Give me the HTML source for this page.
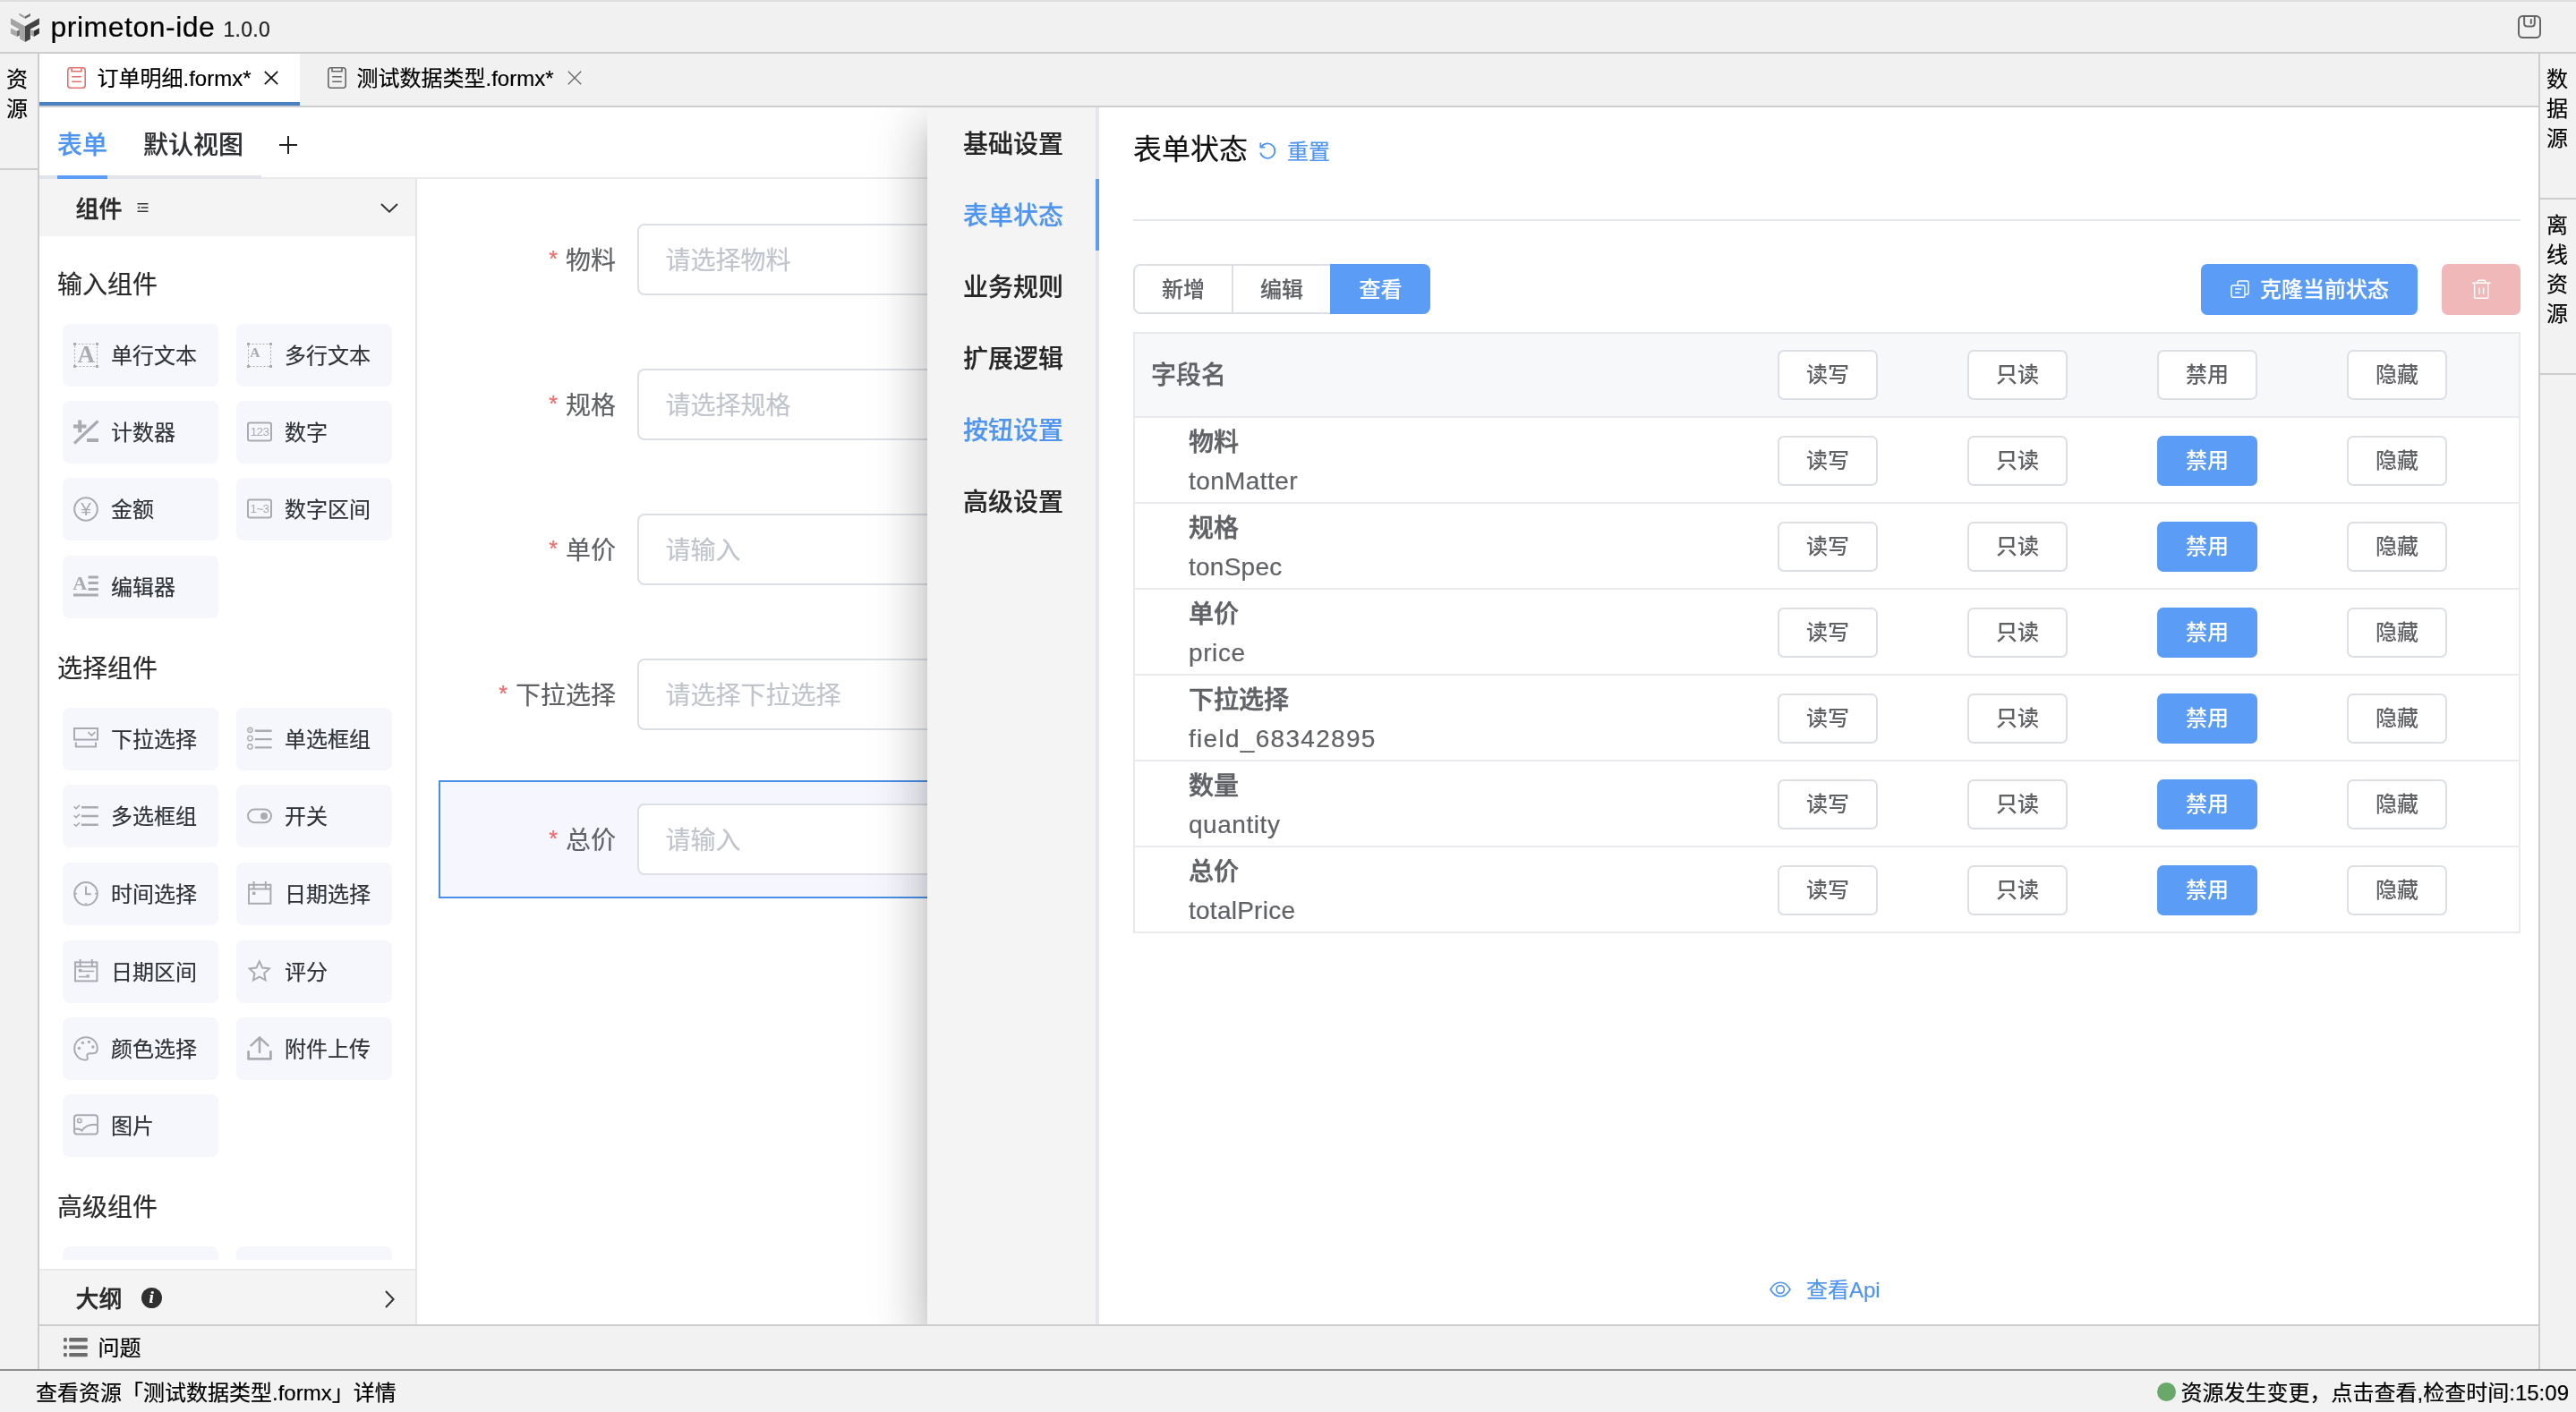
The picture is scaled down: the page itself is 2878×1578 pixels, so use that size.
<!DOCTYPE html>
<html lang="zh-CN">
<head>
<meta charset="utf-8">
<title>primeton-ide</title>
<style>
*{box-sizing:border-box;margin:0;padding:0}
html,body{width:2878px;height:1578px;overflow:hidden;background:#f2f2f2}
body{font-family:"Liberation Sans","Noto Sans CJK SC",sans-serif;color:#000;position:relative;font-size:24px}
#app{position:absolute;left:0;top:0;width:2878px;height:1578px;will-change:transform;-webkit-text-stroke:0.2px}
.abs{position:absolute}
.t{position:absolute;white-space:nowrap}
svg{position:absolute;overflow:visible}
#titlebar{left:0;top:0;width:2878px;height:60px;background:#f1f1f1;border-top:2px solid #dedede;border-bottom:2px solid #cdcdcd}
#leftbar{left:0;top:60px;width:44px;height:1471px;background:#f2f2f2;border-right:2px solid #cdcdcd}
#rightbar{left:2836px;top:60px;width:42px;height:1471px;background:#f2f2f2;border-left:2px solid #cdcdcd}
#tabbar{left:44px;top:60px;width:2792px;height:60px;background:#f1f1f1;border-bottom:2px solid #cdcdcd}
#tab1{left:44px;top:60px;width:291px;height:58px;background:#fff;border-bottom:4px solid #4a80c4}
#main{left:44px;top:120px;width:2792px;height:1360px;background:#fff;overflow:hidden}
#problems{left:44px;top:1480px;width:2792px;height:51px;background:#f2f2f2;border-top:2px solid #cdcdcd}
#statusbar{left:0;top:1530px;width:2878px;height:48px;background:#f2f2f2;border-top:2px solid #8e8e8e}
.vt{position:absolute;width:30px;font-size:24px;line-height:33px;text-align:center;color:#000}
.hsep{position:absolute;height:2px;background:#cdcdcd}
.card{position:absolute;width:174px;height:70px;background:#f6f7fd;border-radius:8px}
.card .t{left:54px;top:18px;height:36px;line-height:36px;font-size:24px;color:#303336}

.inp{position:absolute;left:668px;width:900px;height:80px;border:2px solid #dcdfe6;border-radius:8px;background:#fff}
.inp .t{left:29.5px;top:19px;height:42px;line-height:42px;font-size:28px;color:#c0c4cc}
.lbl{position:absolute;right:2148px;height:42px;line-height:42px;font-size:28px;color:#606266;white-space:nowrap}
.lbl i{font-style:normal;color:#ee6b6b;margin-right:9px;font-size:25px;position:relative;top:-2.5px}
.nav{position:absolute;left:996px;width:184px;height:84px;line-height:84px;text-align:center;font-size:28px;font-weight:500;color:#262626}
.btn{position:absolute;width:112px;height:56px;border:2px solid #dcdfe6;border-radius:7px;background:#fff;color:#606266;font-size:24px;line-height:52px;text-align:center;font-weight:500;-webkit-text-stroke:0}
.btn.on{background:#5a9cf6;border-color:#5a9cf6;color:#fff}
.row{position:absolute;left:1222px;width:1550px;height:96px;border-top:2px solid #e9eaee}
.fn{position:absolute;left:62px;font-size:28px;color:#606266;white-space:nowrap;height:46px;line-height:46px}
</style>
</head>
<body>
<div id="app">
<div id="titlebar" class="abs"></div>
<div id="leftbar" class="abs"></div>
<div id="rightbar" class="abs"></div>
<div id="tabbar" class="abs"></div>
<div id="tab1" class="abs"></div>
<svg style="left:11px;top:14px" width="34" height="34" viewBox="0 0 34 34" stroke="none">
<polygon points="10.3,0.4 17,4.3 17,7.1 10.6,3.35" fill="#a6a6a6"/>
<polygon points="17,4.3 22.9,1 22.9,4 17,7.1" fill="#6c6c6c"/>
<polygon points="0.95,6.15 17,15.2 17,32.95 11.07,29.2 11.07,18.9 0.95,13.3" fill="#a4a4a4"/>
<polygon points="0.95,17.4 7.96,20.8 7.96,27 0.95,23.6" fill="#a9a9a9"/>
<polygon points="7.96,20.8 10.9,19.1 10.9,25.5 7.96,27" fill="#6e6e6e"/>
<polygon points="17,15.2 32.9,6.15 32.9,13.3 22.9,18.6 22.9,29.8 17,32.95" fill="#444"/>
<polygon points="23.4,18.9 26.8,20.6 26.8,26.9 23.4,25.2" fill="#a2a2a2"/>
<polygon points="26.8,20.6 32.9,17.2 32.9,23.6 26.8,26.9" fill="#2f2f2f"/>
</svg>
<div class="t" style="top:5.5px;height:48px;line-height:48px;font-size:32px;color:#000;left:56.5px;letter-spacing:0.5px;">primeton-ide</div>
<div class="t" style="top:15.5px;height:34px;line-height:34px;font-size:23px;color:#222;left:249.5px;letter-spacing:0.3px;">1.0.0</div>
<svg style="left:2812px;top:16px" width="28" height="28" viewBox="0 0 28 28" fill="none" stroke="#666" stroke-width="2" stroke-linecap="round"><rect x="2" y="2" width="24" height="24" rx="4.5"/><path d="M8.15 2V10.1Q8.15 13.6 11.65 13.6H16.3Q19.8 13.6 19.8 10.1V2"/><path d="M15.8 6V10"/></svg>
<div class="vt" style="left:4px;top:72px">资<br>源</div>
<div class="hsep" style="left:0;top:188px;width:42px"></div>
<div class="vt" style="left:2842px;top:72px">数<br>据<br>源</div>
<div class="hsep" style="left:2838px;top:221px;width:40px"></div>
<div class="vt" style="left:2842px;top:235px">离<br>线<br>资<br>源</div>
<div class="hsep" style="left:2838px;top:417px;width:40px"></div>
<svg style="left:75px;top:74.5px" width="21" height="24" viewBox="0 0 21 24" fill="none" stroke="#e4706c" stroke-width="1.6"><rect x="0.8" y="0.8" width="19.4" height="22.4" rx="3"/><path d="M5 1.2V4.8H16V1.2M5.2 10.8H15.8M5.2 16.2H15.8"/></svg>
<div class="t" style="top:70.0px;height:36px;line-height:36px;font-size:24px;color:#000;left:108.5px;">订单明细.formx*</div>
<svg style="left:295px;top:79px" width="16" height="16" viewBox="0 0 16 16" fill="none" stroke="#111" stroke-width="1.7"><path d="M0.8 0.8L15.2 15.2M15.2 0.8L0.8 15.2"/></svg>
<svg style="left:366px;top:74.5px" width="21" height="24" viewBox="0 0 21 24" fill="none" stroke="#666" stroke-width="1.6"><rect x="0.8" y="0.8" width="19.4" height="22.4" rx="3"/><path d="M5 1.2V4.8H16V1.2M5.2 10.8H15.8M5.2 16.2H15.8"/></svg>
<div class="t" style="top:70.0px;height:36px;line-height:36px;font-size:24px;color:#000;left:398.5px;">测试数据类型.formx*</div>
<svg style="left:633.5px;top:79px" width="16" height="16" viewBox="0 0 16 16" fill="none" stroke="#666" stroke-width="1.3"><path d="M0.8 0.8L15.2 15.2M15.2 0.8L0.8 15.2"/></svg>
<div id="main" class="abs">
<div class="abs" style="left:0;top:76px;width:248px;height:4px;background:#e2e4ec"></div>
<div class="abs" style="left:248px;top:78px;width:800px;height:2px;background:#ece9eb"></div>
<div class="abs" style="left:20px;top:76px;width:56px;height:4px;background:#5a9cf6"></div>
<div class="t" style="top:21.5px;height:42px;line-height:42px;font-size:28px;color:#4f95ee;font-weight:500;left:20px;">表单</div>
<div class="t" style="top:21.5px;height:42px;line-height:42px;font-size:28px;color:#2d2f33;font-weight:500;left:116px;">默认视图</div>
<svg style="left:268px;top:32px" width="20" height="20" viewBox="0 0 20 20" fill="none" stroke="#222" stroke-width="2"><path d="M0 10H20M10 0V20"/></svg>
<div class="abs" style="left:0;top:80px;width:422px;height:1280px;border-right:2px solid #e6e6e6;overflow:hidden">
<div class="abs" style="left:0;top:0;width:420px;height:64px;background:#f4f4f5"></div>
<div class="t" style="top:14.5px;height:39px;line-height:39px;font-size:26px;color:#2a2a2a;font-weight:500;left:40.5px;-webkit-text-stroke:0.4px #2a2a2a;">组件</div>
<svg style="left:109px;top:27px" width="13" height="10" viewBox="0 0 13 10" fill="none" stroke="#333" stroke-width="1.6"><path d="M0.5 0.8H12.5M4.5 5H12.5M0.5 9.2H12.5"/><path d="M2.8 3.2L0.6 5L2.8 6.8Z" fill="#333" stroke="none"/></svg>
<svg style="left:381px;top:27px" width="20" height="11" viewBox="0 0 20 11" fill="none" stroke="#333" stroke-width="2"><path d="M1 1L10 9.6L19 1"/></svg>
<div class="t" style="top:98.0px;height:42px;line-height:42px;font-size:28px;color:#2a2a2a;left:20px;">输入组件</div>
<div class="card" style="left:26px;top:162.0px"><svg style="left:12px;top:20.6px" width="28" height="28" viewBox="0 0 28 28" fill="none" stroke="#a9abb1" stroke-width="2" ><rect x="1.5" y="1.5" width="25" height="25" stroke-width="1" stroke-dasharray="2 2"/><rect x="0" y="0" width="3" height="3" fill="#a9abb1" stroke="none"/><rect x="0" y="25" width="3" height="3" fill="#a9abb1" stroke="none"/><rect x="25" y="0" width="3" height="3" fill="#a9abb1" stroke="none"/><rect x="25" y="25" width="3" height="3" fill="#a9abb1" stroke="none"/><text x="14.2" y="22.3" text-anchor="middle" font-family="Liberation Serif,serif" font-weight="bold" font-size="27" fill="#a9abb1" stroke="none">A</text></svg><div class="t">单行文本</div></div>
<div class="card" style="left:220px;top:162.0px"><svg style="left:12px;top:20.6px" width="28" height="28" viewBox="0 0 28 28" fill="none" stroke="#a9abb1" stroke-width="2" ><rect x="1.5" y="1.5" width="25" height="25" stroke-width="1" stroke-dasharray="2 2"/><rect x="0" y="0" width="3" height="3" fill="#a9abb1" stroke="none"/><rect x="0" y="25" width="3" height="3" fill="#a9abb1" stroke="none"/><rect x="25" y="0" width="3" height="3" fill="#a9abb1" stroke="none"/><rect x="25" y="25" width="3" height="3" fill="#a9abb1" stroke="none"/><text x="8.8" y="16" text-anchor="middle" font-family="Liberation Serif,serif" font-weight="bold" font-size="15.5" fill="#a9abb1" stroke="none">A</text></svg><div class="t">多行文本</div></div>
<div class="card" style="left:26px;top:248.0px"><svg style="left:12px;top:20.6px" width="28" height="28" viewBox="0 0 28 28" fill="none" stroke="#a9abb1" stroke-width="2" ><path d="M0 7.4H14.4M7.2 0.6V14.2" stroke-width="4"/><path d="M27.5 1.5L1 26.5" stroke-width="3.2"/><path d="M15 23H28" stroke-width="4"/></svg><div class="t">计数器</div></div>
<div class="card" style="left:220px;top:248.0px"><svg style="left:12px;top:20.6px" width="28" height="28" viewBox="0 0 28 28" fill="none" stroke="#a9abb1" stroke-width="2" ><rect x="1" y="3.6" width="26" height="20" rx="2"/><text x="14" y="18.2" text-anchor="middle" font-family="Liberation Sans,sans-serif" font-size="13.5" letter-spacing="-0.7" fill="#a9abb1" stroke="none">123</text></svg><div class="t">数字</div></div>
<div class="card" style="left:26px;top:334.0px"><svg style="left:12px;top:20.6px" width="28" height="28" viewBox="0 0 28 28" fill="none" stroke="#a9abb1" stroke-width="2" ><circle cx="14" cy="14" r="12.8"/><text x="14" y="21.4" text-anchor="middle" font-family="Liberation Sans,sans-serif" font-size="21" fill="#a9abb1" stroke="none">¥</text></svg><div class="t">金额</div></div>
<div class="card" style="left:220px;top:334.0px"><svg style="left:12px;top:20.6px" width="28" height="28" viewBox="0 0 28 28" fill="none" stroke="#a9abb1" stroke-width="2" ><rect x="1" y="3.6" width="26" height="20" rx="2"/><text x="14" y="18.2" text-anchor="middle" font-family="Liberation Sans,sans-serif" font-size="13.5" letter-spacing="-0.7" fill="#a9abb1" stroke="none">1~3</text></svg><div class="t">数字区间</div></div>
<div class="card" style="left:26px;top:421.0px"><svg style="left:12px;top:20.6px" width="28" height="28" viewBox="0 0 28 28" fill="none" stroke="#a9abb1" stroke-width="2" ><text x="7.2" y="16.6" text-anchor="middle" font-family="Liberation Serif,serif" font-weight="bold" font-size="22" fill="#a9abb1" stroke="none">A</text><path d="M16.6 3H27.8M16.6 9.6H27.8M16.6 16.4H27.8M0 23H27.8" stroke-width="3"/></svg><div class="t">编辑器</div></div>
<div class="t" style="top:527.0px;height:42px;line-height:42px;font-size:28px;color:#2a2a2a;left:20px;">选择组件</div>
<div class="card" style="left:26px;top:591.0px"><svg style="left:12px;top:20.6px" width="28" height="28" viewBox="0 0 28 28" fill="none" stroke="#a9abb1" stroke-width="2" ><rect x="1" y="2" width="26" height="12.6"/><path d="M16.4 6.2L20.4 10L24.4 6.2" stroke-width="1.8"/><path d="M2.8 17.6V22.4H25V17.6"/></svg><div class="t">下拉选择</div></div>
<div class="card" style="left:220px;top:591.0px"><svg style="left:12px;top:20.6px" width="28" height="28" viewBox="0 0 28 28" fill="none" stroke="#a9abb1" stroke-width="2" ><circle cx="3.4" cy="3.8" r="2.7" stroke-width="1.4"/><circle cx="3.4" cy="3.8" r="1" fill="#a9abb1" stroke="none"/><circle cx="3.4" cy="13.1" r="2.7" stroke-width="1.4"/><circle cx="3.4" cy="22.4" r="2.7" stroke-width="1.4"/><path d="M8.8 4.8H27.6M8.8 14.1H27.6M8.8 23.4H27.6" stroke-width="2.4"/></svg><div class="t">单选框组</div></div>
<div class="card" style="left:26px;top:677.0px"><svg style="left:12px;top:20.6px" width="28" height="28" viewBox="0 0 28 28" fill="none" stroke="#a9abb1" stroke-width="2" ><path d="M0.6 3.4L3 5.6L7 1.8M0.6 13.4L3 15.6L7 11.8M0.6 23L3 25.2L7 21.4" stroke-width="1.6"/><path d="M9 4.2H27.8M9 14H27.8M9 23.8H27.8" stroke-width="2.4"/></svg><div class="t">多选框组</div></div>
<div class="card" style="left:220px;top:677.0px"><svg style="left:12px;top:20.6px" width="28" height="28" viewBox="0 0 28 28" fill="none" stroke="#a9abb1" stroke-width="2" ><rect x="1" y="6.6" width="26" height="14.6" rx="7.3"/><circle cx="19" cy="13.9" r="4" fill="#a9abb1" stroke="none"/></svg><div class="t">开关</div></div>
<div class="card" style="left:26px;top:764.0px"><svg style="left:12px;top:20.6px" width="28" height="28" viewBox="0 0 28 28" fill="none" stroke="#a9abb1" stroke-width="2" ><circle cx="14" cy="13.8" r="12.8"/><path d="M14 5.6V14.2H19.8" stroke-width="2"/><path d="M1.4 13.8H4M24 13.8H26.6M14 24V26.4" stroke-width="1.6"/></svg><div class="t">时间选择</div></div>
<div class="card" style="left:220px;top:764.0px"><svg style="left:12px;top:20.6px" width="28" height="28" viewBox="0 0 28 28" fill="none" stroke="#a9abb1" stroke-width="2" ><rect x="2" y="3.8" width="24.4" height="21"/><path d="M2 8.6H26.4M7.6 0V8.6M20.8 0V8.6"/><rect x="6" y="11.6" width="3.4" height="3.4" fill="#a9abb1" stroke="none"/></svg><div class="t">日期选择</div></div>
<div class="card" style="left:26px;top:851.0px"><svg style="left:12px;top:20.6px" width="28" height="28" viewBox="0 0 28 28" fill="none" stroke="#a9abb1" stroke-width="2" ><rect x="2" y="3.4" width="24.4" height="21"/><path d="M2 8.2H26.4M7.6 0V8.2M20.8 0V8.2"/><rect x="5.8" y="11" width="3.4" height="3.4" fill="#a9abb1" stroke="none"/><path d="M9 13.4H23" stroke-width="1.6"/><rect x="14.4" y="17.2" width="3.4" height="3.4" fill="#a9abb1" stroke="none"/><path d="M5.8 19.6H14.6" stroke-width="1.6"/></svg><div class="t">日期区间</div></div>
<div class="card" style="left:220px;top:851.0px"><svg style="left:12px;top:20.6px" width="28" height="28" viewBox="0 0 28 28" fill="none" stroke="#a9abb1" stroke-width="2" ><polygon points="13.80,2.40 17.09,9.47 24.83,10.42 19.13,15.73 20.62,23.38 13.80,19.60 6.98,23.38 8.47,15.73 2.77,10.42 10.51,9.47" stroke-width="2" stroke-linejoin="miter"/></svg><div class="t">评分</div></div>
<div class="card" style="left:26px;top:937.0px"><svg style="left:12px;top:20.6px" width="28" height="28" viewBox="0 0 28 28" fill="none" stroke="#a9abb1" stroke-width="2" ><path d="M14 1.2C6.6 1.2 1.2 6.8 1.2 13.8C1.2 21 6.6 26.6 13.4 26.6C15.6 26.6 16.4 25 15.6 23.4C14.6 21.4 15.6 19.2 18.2 19.2H22C25 19.2 26.8 17 26.8 13.8C26.8 6.8 21.4 1.2 14 1.2Z"/><circle cx="6.4" cy="13.4" r="1.7" fill="#a9abb1" stroke="none"/><circle cx="10.4" cy="7.4" r="1.7" fill="#a9abb1" stroke="none"/><circle cx="17.4" cy="6.4" r="1.7" fill="#a9abb1" stroke="none"/><circle cx="21.8" cy="12" r="1.7" fill="#a9abb1" stroke="none"/></svg><div class="t">颜色选择</div></div>
<div class="card" style="left:220px;top:937.0px"><svg style="left:12px;top:20.6px" width="28" height="28" viewBox="0 0 28 28" fill="none" stroke="#a9abb1" stroke-width="2" ><path d="M14 18V1.8M4.6 10.4L14 1.4L23.4 10.4" stroke-width="2.6" stroke-linecap="round" stroke-linejoin="round"/><path d="M1.6 17.4V25.4H26.4V17.4" stroke-width="2.8" stroke-linecap="round" stroke-linejoin="round"/></svg><div class="t">附件上传</div></div>
<div class="card" style="left:26px;top:1023.0px"><svg style="left:12px;top:20.6px" width="28" height="28" viewBox="0 0 28 28" fill="none" stroke="#a9abb1" stroke-width="2" ><rect x="1" y="2.2" width="26" height="21.4" rx="3"/><circle cx="6.8" cy="8.4" r="2.2" stroke-width="1.6"/><path d="M1 18.4C4 16.8 6.6 17.2 9.4 19.6C12.4 15.6 17 11.6 27 13.2" stroke-width="2"/></svg><div class="t">图片</div></div>
<div class="t" style="top:1129.0px;height:42px;line-height:42px;font-size:28px;color:#2a2a2a;left:20px;">高级组件</div>
<div class="card" style="left:26px;top:1193px"></div><div class="card" style="left:220px;top:1193px"></div>
<div class="abs" style="left:0;top:1208px;width:420px;height:12px;background:#fff"></div>
<div class="abs" style="left:0;top:1218px;width:420px;height:64px;background:#f4f4f5;border-top:2px solid #e9e9e9"></div>
<div class="t" style="top:1233.0px;height:39px;line-height:39px;font-size:26px;color:#2a2a2a;font-weight:500;left:40.5px;-webkit-text-stroke:0.4px #2a2a2a;">大纲</div>
<div class="abs" style="left:114px;top:1239px;width:22.5px;height:22.5px;border-radius:12px;background:#303030;color:#fff;font-family:'Liberation Serif',serif;font-style:italic;font-weight:700;font-size:19px;line-height:22px;text-align:center">i</div>
<svg style="left:386px;top:1242px" width="11" height="20" viewBox="0 0 11 20" fill="none" stroke="#333" stroke-width="2"><path d="M1 1L9.6 10L1 19"/></svg>
</div>
<div class="abs" style="left:446px;top:752px;width:700px;height:132px;border:2px solid #4a8fe6;background:#f6f7fe"></div>
<div class="lbl" style="right:2148px;top:150.5px"><i>*</i>物料</div>
<div class="inp" style="left:668px;top:130.0px"><div class="t">请选择物料</div></div>
<div class="lbl" style="right:2148px;top:312.5px"><i>*</i>规格</div>
<div class="inp" style="left:668px;top:292.0px"><div class="t">请选择规格</div></div>
<div class="lbl" style="right:2148px;top:474.5px"><i>*</i>单价</div>
<div class="inp" style="left:668px;top:454.0px"><div class="t">请输入</div></div>
<div class="lbl" style="right:2148px;top:636.5px"><i>*</i>下拉选择</div>
<div class="inp" style="left:668px;top:616.0px"><div class="t">请选择下拉选择</div></div>
<div class="lbl" style="right:2148px;top:798.5px"><i>*</i>总价</div>
<div class="inp" style="left:668px;top:778.0px"><div class="t">请输入</div></div>
<div class="abs" style="left:992px;top:0;width:1800px;height:1360px;background:#fff;box-shadow:0 16px 20px -10px rgba(0,0,0,.2),0 32px 48px 4px rgba(0,0,0,.14),0 12px 60px 10px rgba(0,0,0,.12)"></div>
<div class="abs" style="left:992px;top:0;width:192px;height:1360px;background:#f4f4f5;border-right:4px solid #e6e7ee"></div>
<div class="nav" style="top:0px;color:#262626">基础设置</div>
<div class="nav" style="top:80px;color:#4f95ee">表单状态</div>
<div class="nav" style="top:160px;color:#262626">业务规则</div>
<div class="nav" style="top:240px;color:#262626">扩展逻辑</div>
<div class="nav" style="top:320px;color:#4f95ee">按钮设置</div>
<div class="nav" style="top:400px;color:#262626">高级设置</div>
<div class="abs" style="left:1180px;top:80px;width:4px;height:80px;background:#5a9cf6"></div>
<div class="t" style="top:23.0px;height:48px;line-height:48px;font-size:32px;color:#111;left:1222px;">表单状态</div>
<svg style="left:1362px;top:37.5px" width="20" height="20" viewBox="0 0 20 20" fill="none" stroke="#4f95ee" stroke-width="1.8"><path d="M3.2 6.2A8.2 8.2 0 1 1 2.2 12.6"/><path d="M2.2 1.6V6.6H7.2" stroke-width="1.6"/></svg>
<div class="t" style="top:31.5px;height:36px;line-height:36px;font-size:24px;color:#4f95ee;left:1394px;">重置</div>
<div class="abs" style="left:1222px;top:125px;width:1550px;height:2px;background:#e4e7ed"></div>
<div class="abs" style="left:1222px;top:175px;width:332px;height:56px;border:2px solid #dcdfe6;border-radius:8px;background:#fff"></div>
<div class="abs" style="left:1332px;top:175px;width:2px;height:56px;background:#dcdfe6"></div>
<div class="abs" style="left:1442px;top:175px;width:112px;height:56px;background:#5a9cf6;border-radius:0 8px 8px 0"></div>
<div class="t" style="top:185.5px;height:36px;line-height:36px;font-size:24px;color:#606266;font-weight:500;left:1223.0px;width:110px;text-align:center;">新增</div>
<div class="t" style="top:185.5px;height:36px;line-height:36px;font-size:24px;color:#606266;font-weight:500;left:1333.0px;width:110px;text-align:center;">编辑</div>
<div class="t" style="top:185.5px;height:36px;line-height:36px;font-size:24px;color:#fff;font-weight:500;left:1443.5px;width:110px;text-align:center;">查看</div>
<div class="abs" style="left:2415px;top:175px;width:242px;height:57px;background:#5a9cf6;border-radius:7px"></div>
<svg style="left:2448px;top:192px" width="22" height="23" viewBox="0 0 22 23" fill="none" stroke="#fff" stroke-width="1.5"><path d="M8 6.6V3.5Q8 2 9.5 2H18.5Q20 2 20 3.5V15.5Q20 17 18.5 17H16.4"/><rect x="1.1" y="7" width="14.8" height="13.2" rx="1.5"/><path d="M5 11H12.4M5 15.2H10.4"/></svg>
<div class="t" style="top:185.5px;height:36px;line-height:36px;font-size:24px;color:#fff;font-weight:500;left:2481px;">克隆当前状态</div>
<div class="abs" style="left:2684px;top:175px;width:88px;height:57px;background:#f0b8b8;border-radius:7px"></div>
<svg style="left:2717px;top:191px" width="22" height="24" viewBox="0 0 22 24" fill="none" stroke="#fff" stroke-width="1.5"><path d="M1 5.3H21.5M7.4 5.3V3.2Q7.4 2.2 8.4 2.2H14.6Q15.6 2.2 15.6 3.2V5.3M3.6 5.3V21.2Q3.6 22.2 4.6 22.2H17.8Q18.8 22.2 18.8 21.2V5.3M8.8 10.4V17.8M13.6 10.4V17.8"/></svg>
<div class="abs" style="left:1222px;top:251px;width:1550px;height:672px;border:2px solid #e9eaee"></div>
<div class="abs" style="left:1224px;top:253px;width:1546px;height:93px;background:#f7f8fa"></div>
<div class="t" style="top:279.0px;height:42px;line-height:42px;font-size:28px;color:#606266;font-weight:500;left:1242px;-webkit-text-stroke:0.3px #606266;">字段名</div>
<div class="btn" style="left:1942px;top:271px">读写</div>
<div class="btn" style="left:2154px;top:271px">只读</div>
<div class="btn" style="left:2366px;top:271px">禁用</div>
<div class="btn" style="left:2578px;top:271px">隐藏</div>
<div class="row" style="top:345px"><div class="fn" style="top:5px;font-weight:500;-webkit-text-stroke:0.55px #606266">物料</div><div class="fn" style="top:48px;letter-spacing:0.4px">tonMatter</div></div>
<div class="btn" style="left:1942px;top:367px">读写</div>
<div class="btn" style="left:2154px;top:367px">只读</div>
<div class="btn on" style="left:2366px;top:367px">禁用</div>
<div class="btn" style="left:2578px;top:367px">隐藏</div>
<div class="row" style="top:441px"><div class="fn" style="top:5px;font-weight:500;-webkit-text-stroke:0.55px #606266">规格</div><div class="fn" style="top:48px;letter-spacing:0.25px">tonSpec</div></div>
<div class="btn" style="left:1942px;top:463px">读写</div>
<div class="btn" style="left:2154px;top:463px">只读</div>
<div class="btn on" style="left:2366px;top:463px">禁用</div>
<div class="btn" style="left:2578px;top:463px">隐藏</div>
<div class="row" style="top:537px"><div class="fn" style="top:5px;font-weight:500;-webkit-text-stroke:0.55px #606266">单价</div><div class="fn" style="top:48px;letter-spacing:0.6px">price</div></div>
<div class="btn" style="left:1942px;top:559px">读写</div>
<div class="btn" style="left:2154px;top:559px">只读</div>
<div class="btn on" style="left:2366px;top:559px">禁用</div>
<div class="btn" style="left:2578px;top:559px">隐藏</div>
<div class="row" style="top:633px"><div class="fn" style="top:5px;font-weight:500;-webkit-text-stroke:0.55px #606266">下拉选择</div><div class="fn" style="top:48px;letter-spacing:1.3px">field_68342895</div></div>
<div class="btn" style="left:1942px;top:655px">读写</div>
<div class="btn" style="left:2154px;top:655px">只读</div>
<div class="btn on" style="left:2366px;top:655px">禁用</div>
<div class="btn" style="left:2578px;top:655px">隐藏</div>
<div class="row" style="top:729px"><div class="fn" style="top:5px;font-weight:500;-webkit-text-stroke:0.55px #606266">数量</div><div class="fn" style="top:48px;letter-spacing:0.55px">quantity</div></div>
<div class="btn" style="left:1942px;top:751px">读写</div>
<div class="btn" style="left:2154px;top:751px">只读</div>
<div class="btn on" style="left:2366px;top:751px">禁用</div>
<div class="btn" style="left:2578px;top:751px">隐藏</div>
<div class="row" style="top:825px"><div class="fn" style="top:5px;font-weight:500;-webkit-text-stroke:0.55px #606266">总价</div><div class="fn" style="top:48px;letter-spacing:0.25px">totalPrice</div></div>
<div class="btn" style="left:1942px;top:847px">读写</div>
<div class="btn" style="left:2154px;top:847px">只读</div>
<div class="btn on" style="left:2366px;top:847px">禁用</div>
<div class="btn" style="left:2578px;top:847px">隐藏</div>
<svg style="left:1933px;top:1312px" width="24" height="18" viewBox="0 0 24 18" fill="none" stroke="#4f95ee" stroke-width="1.6"><path d="M1 9C4 3.6 8 1.2 12 1.2C16 1.2 20 3.6 23 9C20 14.4 16 16.8 12 16.8C8 16.8 4 14.4 1 9Z"/><circle cx="12" cy="9" r="4.4"/></svg>
<div class="t" style="top:1303.5px;height:36px;line-height:36px;font-size:24px;color:#4f95ee;left:1974px;">查看Api</div>
</div>
<div id="problems" class="abs"></div>
<svg style="left:71px;top:1495px" width="27" height="22" viewBox="0 0 27 22" fill="#6c6c6c" stroke="none"><rect x="0" y="0" width="3.8" height="4.4" rx="1.2"/><rect x="6.2" y="0" width="20.6" height="4.4" rx="1.2"/><rect x="0" y="8.4" width="3.8" height="4.4" rx="1.2"/><rect x="6.2" y="8.4" width="20.6" height="4.4" rx="1.2"/><rect x="0" y="16.9" width="3.8" height="4.4" rx="1.2"/><rect x="6.2" y="16.9" width="20.6" height="4.4" rx="1.2"/></svg>
<div class="t" style="top:1489.0px;height:36px;line-height:36px;font-size:24px;color:#000;left:109.5px;">问题</div>
<div id="statusbar" class="abs"></div>
<div class="t" style="top:1539.2px;height:36px;line-height:36px;font-size:24px;color:#000;left:40px;">查看资源「测试数据类型.formx」详情</div>
<div class="abs" style="left:2410px;top:1545px;width:21px;height:21px;border-radius:50%;background:#6aa86a"></div>
<div class="t" style="top:1539.2px;height:36px;line-height:36px;font-size:24px;color:#000;right:8px;">资源发生变更，点击查看,检查时间:15:09</div>
</div>
</body>
</html>
